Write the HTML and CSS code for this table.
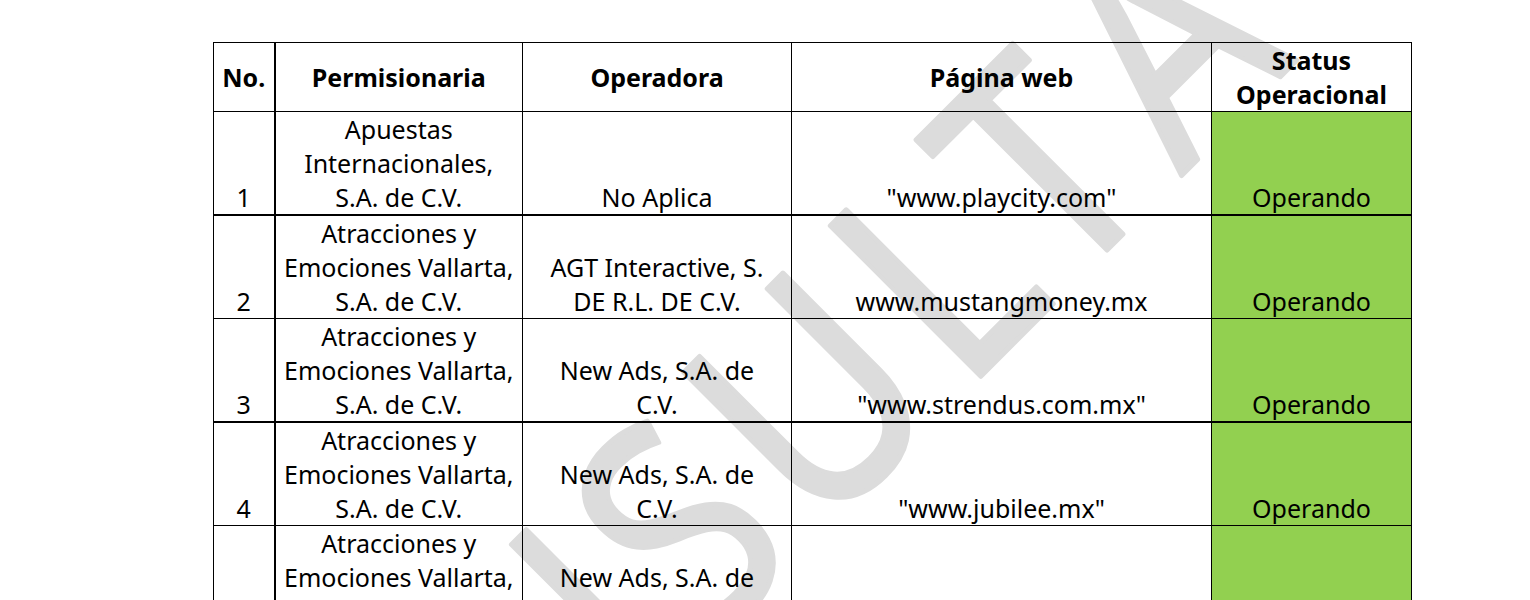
FILE: index.html
```html
<!DOCTYPE html>
<html lang="es">
<head>
<meta charset="utf-8">
<title>Permisionarias</title>
<link rel="stylesheet" href="styles.css">
</head>
<body>
<svg class="watermark" width="1530" height="1400" viewBox="0 0 1530 1400" aria-hidden="true">
  <text class="wm-text" transform="translate(271 1086) rotate(-45) scale(0.86 1)" x="8 215 470 712 899 1138 1305 1497" y="0">CONSULTA</text>
</svg>
<table class="grid">
  <colgroup>
    <col class="c-no"><col class="c-perm"><col class="c-op"><col class="c-web"><col class="c-status">
  </colgroup>
  <thead>
    <tr>
      <th>No.</th>
      <th>Permisionaria</th>
      <th>Operadora</th>
      <th>Página web</th>
      <th>Status Operacional</th>
    </tr>
  </thead>
  <tbody>
    <tr class="thick">
      <td>1</td>
      <td>Apuestas Internacionales, S.A. de C.V.</td>
      <td>No Aplica</td>
      <td>"www.playcity.com"</td>
      <td class="ok">Operando</td>
    </tr>
    <tr>
      <td>2</td>
      <td>Atracciones y Emociones Vallarta, S.A. de C.V.</td>
      <td>AGT Interactive, S. DE R.L. DE C.V.</td>
      <td>www.mustangmoney.mx</td>
      <td class="ok">Operando</td>
    </tr>
    <tr class="thick">
      <td>3</td>
      <td>Atracciones y Emociones Vallarta, S.A. de C.V.</td>
      <td>New Ads, S.A. de C.V.</td>
      <td>"www.strendus.com.mx"</td>
      <td class="ok">Operando</td>
    </tr>
    <tr>
      <td>4</td>
      <td>Atracciones y Emociones Vallarta, S.A. de C.V.</td>
      <td>New Ads, S.A. de C.V.</td>
      <td>"www.jubilee.mx"</td>
      <td class="ok">Operando</td>
    </tr>
    <tr>
      <td>5</td>
      <td>Atracciones y Emociones Vallarta, S.A. de C.V.</td>
      <td>New Ads, S.A. de C.V.</td>
      <td>"www.calientexpress.mx"</td>
      <td class="ok">Operando</td>
    </tr>
  </tbody>
</table>
</body>
</html>
```
FILE: styles.css
```css
html {
  margin: 0;
  padding: 0;
  background: #ffffff;
}
body {
  margin: 0;
  font-family: "Noto Sans", "Open Sans", sans-serif;
  color: #000000;
  position: relative;
  padding-top: 42px;
  padding-left: 213px;
  width: 1317px;
}
.watermark {
  position: absolute;
  left: 0;
  top: 0;
  z-index: -1;
}
.wm-text {
  font-family: "Noto Sans", "Open Sans", sans-serif;
  font-size: 298px;
  fill: #dcdcdc;
  stroke: #dcdcdc;
  stroke-width: 5px;
  stroke-linejoin: round;
}
.grid {
  border-collapse: collapse;
  table-layout: fixed;
  width: 1198px;
  font-size: 25px;
  line-height: 34px;
}
.c-no { width: 61px; }
.c-perm { width: 248px; }
.c-op { width: 269px; }
.c-web { width: 420px; }
.c-status { width: 200px; }
.grid th,
.grid td {
  border: 1px solid #000000;
  padding: 0 4px;
  text-align: center;
}
.grid td:nth-child(2) {
  padding: 0 6px;
}
.grid td:nth-child(3) {
  padding: 0 15px;
}
.grid th {
  font-weight: 700;
  vertical-align: middle;
}
.grid td {
  font-weight: 400;
  vertical-align: bottom;
}
.grid th:first-child,
.grid td:first-child {
  border-right: 2px solid #000000;
}
.grid tr.thick td {
  border-bottom: 2px solid #000000;
}
.grid td.ok {
  background: #92d050;
}
```
